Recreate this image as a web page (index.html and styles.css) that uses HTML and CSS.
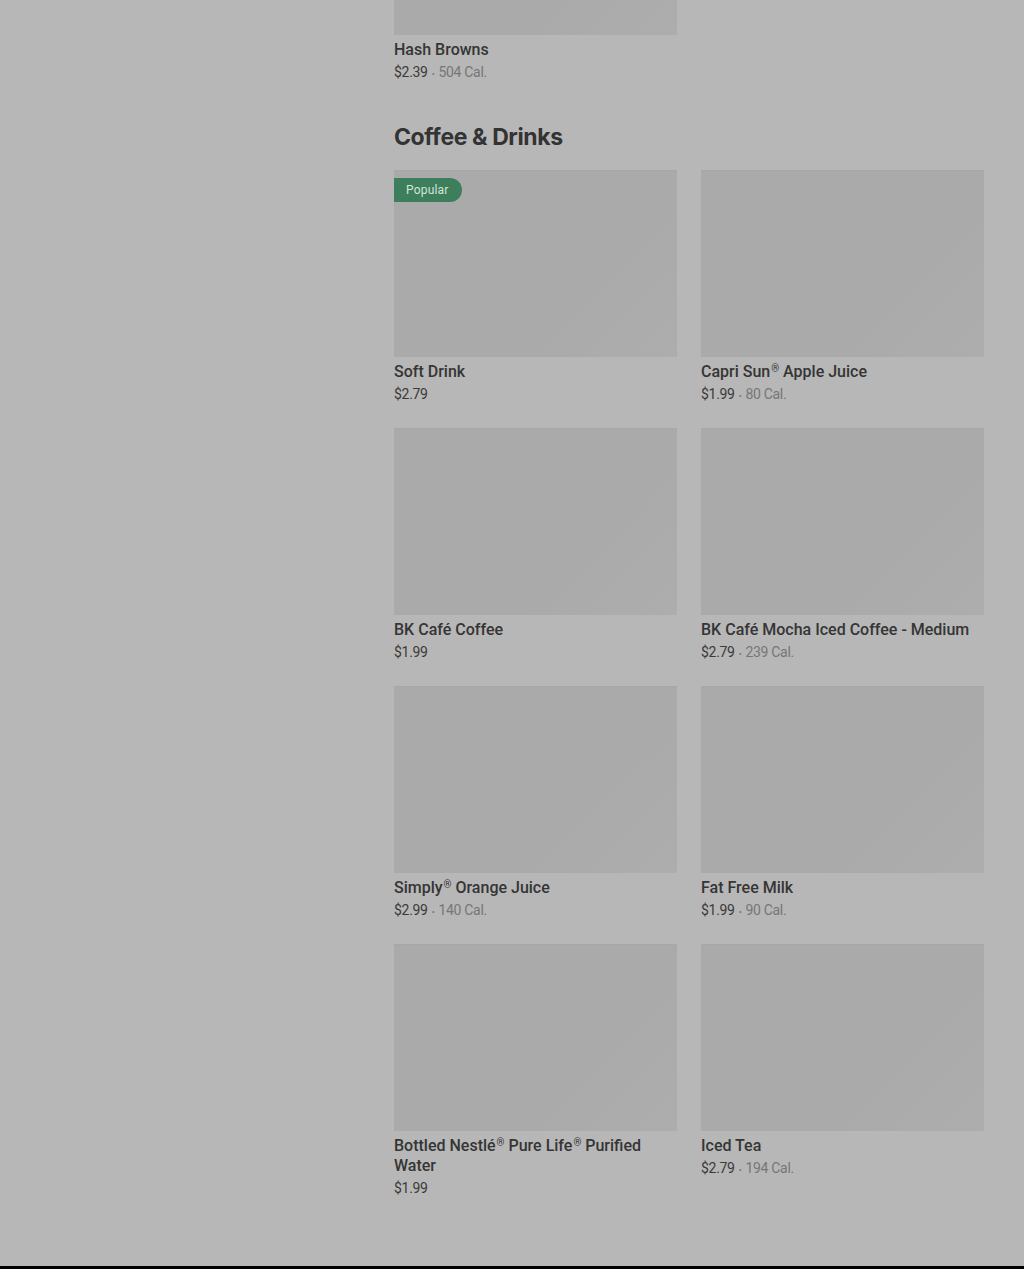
FILE: index.html
```html
<!DOCTYPE html>
<html lang="en">
<head>
    <meta charset="UTF-8">
    <meta name="viewport" content="width=device-width, initial-scale=1.0">
    <title>Burger King • Menu</title>
    <link rel="stylesheet" href="styles.css">
</head>
<body>
    <div class="page">
        <aside class="sidebar"></aside>

        <main class="menu">
            <!-- tail of the previous section -->
            <section class="section section-scrolled">
                <div class="grid">
                    <div class="item">
                        <div class="thumb"></div>
                        <div class="name">Hash Browns</div>
                        <div class="meta">$2.39<span class="sep">•</span><span class="cal">504 Cal.</span></div>
                    </div>
                </div>
            </section>

            <section class="section">
                <h2 class="section-title">Coffee &amp; Drinks</h2>
                <div class="grid">
                    <div class="item">
                        <div class="thumb">
                            <span class="badge">Popular</span>
                        </div>
                        <div class="name">Soft Drink</div>
                        <div class="meta">$2.79</div>
                    </div>
                    <div class="item">
                        <div class="thumb"></div>
                        <div class="name">Capri Sun<span class="reg">®</span> Apple Juice</div>
                        <div class="meta">$1.99<span class="sep">•</span><span class="cal">80 Cal.</span></div>
                    </div>
                    <div class="item">
                        <div class="thumb"></div>
                        <div class="name">BK Café Coffee</div>
                        <div class="meta">$1.99</div>
                    </div>
                    <div class="item">
                        <div class="thumb"></div>
                        <div class="name">BK Café Mocha Iced Coffee - Medium</div>
                        <div class="meta">$2.79<span class="sep">•</span><span class="cal">239 Cal.</span></div>
                    </div>
                    <div class="item">
                        <div class="thumb"></div>
                        <div class="name">Simply<span class="reg">®</span> Orange Juice</div>
                        <div class="meta">$2.99<span class="sep">•</span><span class="cal">140 Cal.</span></div>
                    </div>
                    <div class="item">
                        <div class="thumb"></div>
                        <div class="name">Fat Free Milk</div>
                        <div class="meta">$1.99<span class="sep">•</span><span class="cal">90 Cal.</span></div>
                    </div>
                    <div class="item">
                        <div class="thumb"></div>
                        <div class="name">Bottled Nestlé<span class="reg">®</span> Pure Life<span class="reg">®</span> Purified Water</div>
                        <div class="meta">$1.99</div>
                    </div>
                    <div class="item">
                        <div class="thumb"></div>
                        <div class="name">Iced Tea</div>
                        <div class="meta">$2.79<span class="sep">•</span><span class="cal">194 Cal.</span></div>
                    </div>
                </div>
            </section>
        </main>
    </div>
    <footer class="footer"></footer>
</body>
</html>
```

FILE: styles.css
```css
:root {
    --backdrop: #b7b7b7;
    --thumb: #aaaaaa;
    --text: #353535;
    --muted: #767676;
    --badge: #3d7e5c;
}

body {
    margin: 0;
    background: var(--backdrop);
    font-family: Roboto, "Liberation Sans", sans-serif;
    color: var(--text);
}

.page {
    display: grid;
    grid-template-columns: 1fr 590px;
    column-gap: 24px;
    padding-right: 40px;
}

.menu {
    display: flex;
    flex-direction: column;
    padding-bottom: 68px;
}

.section-scrolled {
    margin-top: -152px;
    margin-bottom: 39px;
}

.section-title {
    margin: 0 0 17px;
    font-family: Inter, "Noto Sans", sans-serif;
    font-size: 23px;
    line-height: 32px;
    font-weight: 700;
    letter-spacing: -0.4px;
    color: #333;
}

.grid {
    display: grid;
    grid-template-columns: 1fr 1fr;
    gap: 24px;
}

.item {
    display: flex;
    flex-direction: column;
}

.thumb {
    position: relative;
    height: 187px;
    margin-bottom: 5px;
    background: linear-gradient(135deg, #aaaaaa 65%, #adadad 100%);
    box-shadow: inset 0 1px 0 #a7a7a7;
}

.badge {
    position: absolute;
    top: 8px;
    left: 0;
    height: 24px;
    padding: 0 13px 0 12px;
    display: flex;
    align-items: center;
    font-size: 12px;
    letter-spacing: 0.2px;
    color: #d3e4da;
    background: var(--badge);
    border-radius: 0 12px 12px 0;
}

.name {
    font-size: 16px;
    line-height: 20px;
    font-weight: 500;
    color: var(--text);
}

.reg {
    position: relative;
    top: -5px;
    font-size: 10px;
    line-height: 0;
    margin-left: 1px;
}

.meta {
    margin-top: 3px;
    font-size: 14px;
    line-height: 19px;
    height: 19px;
    color: #3a3a3a;
    letter-spacing: -0.3px;
}

.sep {
    margin: 0 4px;
    font-size: 9px;
    line-height: 0;
    color: var(--muted);
}

.cal {
    color: var(--muted);
}

.footer {
    height: 200px;
    background: #000;
}
```
